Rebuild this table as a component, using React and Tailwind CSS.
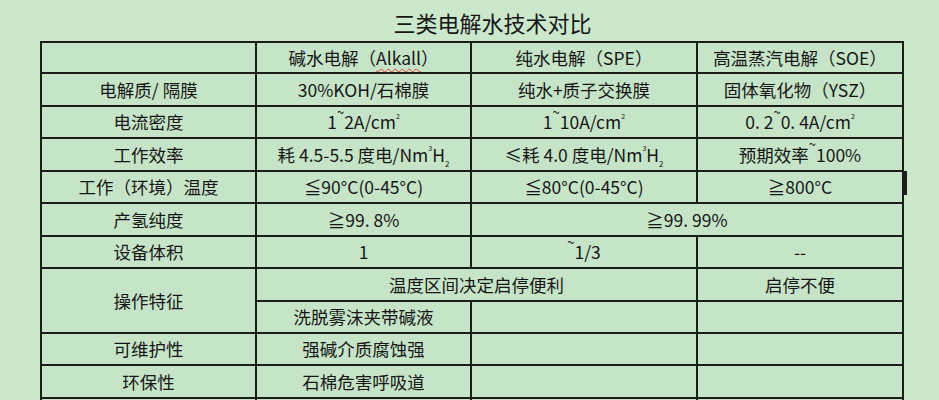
import React from 'react';

function Cell({ children, span = 1, rows = 1, className = '' }) {
  return (
    <td
      colSpan={span}
      rowSpan={rows}
      className={`relative border-2 border-[#1c1c1c] p-0 text-center align-middle leading-none ${className}`}
    >
      {children}
    </td>
  );
}

const Cm2 = () => (
  <>
    A/cm<sup className="text-[7px] align-[7px]">2</sup>
  </>
);

const NmH2 = () => (
  <>
    /Nm<sup className="text-[7px] align-[7px]">3</sup>H<sub className="text-[8px] align-[-3px]">2</sub>
  </>
);

// raised tilde, as in the source sheet
const T = () => <sup className="text-[13px] align-[6px]">~</sup>;

export default function App() {
  return (
    <div className="h-[400px] w-[939px] overflow-hidden bg-[#cbe7cc] font-['Noto_Sans_CJK_SC','Noto_Sans',sans-serif] text-[#161616]">
      <div className="h-[41px] pl-[46px] pt-[11px] text-center text-[22px] leading-[22px]">
        三类电解水技术对比
      </div>

      <div className="pl-[40px]">
        <table className="w-[862px] table-fixed border-collapse bg-[#c6e4c7] text-[17.5px]">
          <colgroup>
            <col className="w-[215px]" />
            <col className="w-[215px]" />
            <col className="w-[226px]" />
            <col className="w-[206px]" />
          </colgroup>
          <tbody>
            <tr className="h-[31px]">
              <Cell />
              <Cell>
                碱水电解（
                <span className="underline decoration-wavy decoration-[#e0423a] decoration-1 underline-offset-[3px]">
                  Alkall
                </span>
                ）
              </Cell>
              <Cell>纯水电解（SPE）</Cell>
              <Cell>高温蒸汽电解（SOE）</Cell>
            </tr>
            <tr className="h-[33px]">
              <Cell>电解质/ 隔膜</Cell>
              <Cell>30%KOH/石棉膜</Cell>
              <Cell>纯水+质子交换膜</Cell>
              <Cell>固体氧化物（YSZ）</Cell>
            </tr>
            <tr className="h-[32px]">
              <Cell>电流密度</Cell>
              <Cell>
                1<T />2<Cm2 />
              </Cell>
              <Cell>
                1<T />10<Cm2 />
              </Cell>
              <Cell>
                0. 2<T />0. 4<Cm2 />
              </Cell>
            </tr>
            <tr className="h-[33px]">
              <Cell>工作效率</Cell>
              <Cell>
                耗 4.5-5.5 度电<NmH2 />
              </Cell>
              <Cell>
                ≤耗 4.0 度电<NmH2 />
              </Cell>
              <Cell>
                预期效率<T />100%
              </Cell>
            </tr>
            <tr className="h-[32px]">
              <Cell>工作（环境）温度</Cell>
              <Cell>≦90°C(0-45°C)</Cell>
              <Cell>≦80°C(0-45°C)</Cell>
              <Cell>
                ≧800°C
                <span className="absolute right-[-5px] top-[-1px] h-[24px] w-[3px] bg-[#1c1c1c]" />
              </Cell>
            </tr>
            <tr className="h-[33px]">
              <Cell>产氢纯度</Cell>
              <Cell>≧99. 8%</Cell>
              <Cell span={2}>≧99. 99%</Cell>
            </tr>
            <tr className="h-[32px]">
              <Cell>设备体积</Cell>
              <Cell>1</Cell>
              <Cell>
                <T />1/3
              </Cell>
              <Cell>--</Cell>
            </tr>
            <tr className="h-[33px]">
              <Cell rows={2}>操作特征</Cell>
              <Cell span={2}>温度区间决定启停便利</Cell>
              <Cell>启停不便</Cell>
            </tr>
            <tr className="h-[32px]">
              <Cell>洗脱雾沫夹带碱液</Cell>
              <Cell />
              <Cell />
            </tr>
            <tr className="h-[32px]">
              <Cell>可维护性</Cell>
              <Cell>强碱介质腐蚀强</Cell>
              <Cell />
              <Cell />
            </tr>
            <tr className="h-[33px]">
              <Cell>环保性</Cell>
              <Cell>石棉危害呼吸道</Cell>
              <Cell />
              <Cell />
            </tr>
            <tr className="h-[32px]">
              <Cell />
              <Cell />
              <Cell />
              <Cell />
            </tr>
          </tbody>
        </table>
      </div>
    </div>
  );
}
